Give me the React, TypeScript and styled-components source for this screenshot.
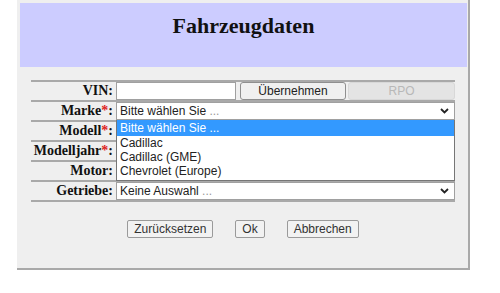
import React from 'react';
import styled, { createGlobalStyle } from 'styled-components';

const GlobalStyle = createGlobalStyle`
    html, body {
        margin: 0;
        background: #ffffff;
    }
`;

const Panel = styled.div`
    background: #efefef;
    border-bottom: 2px solid #a9a9a9;
    border-right: 2px solid #a9a9a9;
    box-sizing: border-box;
    height: 270px;
    margin-left: 17px;
    padding: 3px 1px 0 3px;
    width: 453px;
`;

const Header = styled.div`
    background: #ccccff;
    box-sizing: border-box;
    height: 64px;
    padding-top: 10px;
`;

const Title = styled.h1`
    color: #111;
    font-family: "Liberation Serif", serif;
    font-size: 22px;
    font-weight: bold;
    line-height: 25px;
    margin: 0;
    text-align: center;
`;

const FormTable = styled.div`
    border-top: 2px solid #a9a9a9;
    margin: 13px 0 0 11px;
    width: 424px;
`;

const Row = styled.div`
    align-items: center;
    border-bottom: 2px solid #a9a9a9;
    display: grid;
    grid-template-columns: 85px 1fr;
    height: 18px;
`;

const Label = styled.label`
    color: #111;
    font-family: "Liberation Serif", serif;
    font-size: 14px;
    font-weight: bold;
    line-height: 18px;
    padding-right: 3px;
    text-align: right;
    white-space: nowrap;
`;

const Required = styled.span`
    color: #d22;
`;

const Field = styled.div`
    display: flex;
    height: 18px;
    position: relative;
`;

const TextInput = styled.input`
    background: #fff;
    border: 1px solid #a0a0a0;
    box-sizing: border-box;
    height: 18px;
    margin: 0 4px 0 0;
    padding: 0 2px;
    width: 120px;
`;

const SmallButton = styled.button<{ $width?: number }>`
    background: ${({ disabled }) => (disabled ? '#e4e4e4' : '#f0f0f0')};
    border: 1px solid ${({ disabled }) => (disabled ? '#d8d8d8' : '#8f8f8f')};
    border-radius: 3px;
    box-sizing: border-box;
    color: ${({ disabled }) => (disabled ? '#b8b8b8' : '#222')};
    font-family: "Liberation Sans", Arial, sans-serif;
    font-size: 12px;
    height: 18px;
    line-height: 14px;
    margin-right: 2px;
    padding: 0;
    width: ${({ $width }) => $width || 106}px;
`;

const SelectBox = styled.div`
    align-items: center;
    background: #fff;
    border: 1px solid #a0a0a0;
    box-sizing: border-box;
    color: #222;
    display: flex;
    font-family: "Liberation Sans", Arial, sans-serif;
    font-size: 12px;
    height: 18px;
    justify-content: space-between;
    padding: 0 5px 0 3px;
    width: 339px;
`;

const Dots = styled.span`
    color: #999;
`;

const DropList = styled.ul`
    background: #fff;
    border: 1px solid #767676;
    border-top: none;
    box-sizing: border-box;
    font-family: "Liberation Sans", Arial, sans-serif;
    font-size: 12px;
    left: 0;
    list-style: none;
    margin: 0;
    padding: 0 0 2px;
    position: absolute;
    top: 18px;
    width: 339px;
    z-index: 2;
`;

const Option = styled.li<{ $active?: boolean }>`
    background: ${({ $active }) => ($active ? '#3399ff' : 'transparent')};
    color: ${({ $active }) => ($active ? '#fff' : '#222')};
    height: ${({ $active }) => ($active ? 16 : 14)}px;
    line-height: ${({ $active }) => ($active ? 16 : 14)}px;
    padding-left: 3px;
`;

const Actions = styled.div`
    display: flex;
    gap: 22px;
    justify-content: center;
    margin: 18px 0 0 11px;
    width: 424px;
`;

const ActionButton = styled.button`
    background: #f2f2f2;
    border: 1px solid #9a9a9a;
    border-radius: 2px;
    box-sizing: border-box;
    color: #333;
    font-family: "Liberation Sans", Arial, sans-serif;
    font-size: 12px;
    height: 18px;
    line-height: 14px;
    padding: 0 6px;
`;

const Chevron = () => (
    <svg width="9" height="6" viewBox="0 0 9 6">
        <path d="M1 1 L4.5 4.5 L8 1" fill="none" stroke="#222" strokeWidth="1.8" />
    </svg>
);

const Select = ({ value }: { value: string }) => (
    <SelectBox>
        <span>
            {value} <Dots>...</Dots>
        </span>
        <Chevron />
    </SelectBox>
);

const models = ['Cadillac', 'Cadillac (GME)', 'Chevrolet (Europe)'];

export default function App() {
    return (
        <>
            <GlobalStyle />
            <Panel>
                <Header>
                    <Title>Fahrzeugdaten</Title>
                </Header>
                <FormTable>
                    <Row>
                        <Label>VIN:</Label>
                        <Field>
                            <TextInput type="text" />
                            <SmallButton>Übernehmen</SmallButton>
                            <SmallButton disabled $width={107}>RPO</SmallButton>
                        </Field>
                    </Row>
                    <Row>
                        <Label>Marke<Required>*</Required>:</Label>
                        <Field>
                            <Select value="Bitte wählen Sie" />
                            <DropList>
                                <Option $active>Bitte wählen Sie ...</Option>
                                {models.map((m) => (
                                    <Option key={m}>{m}</Option>
                                ))}
                            </DropList>
                        </Field>
                    </Row>
                    <Row>
                        <Label>Modell<Required>*</Required>:</Label>
                        <Field />
                    </Row>
                    <Row>
                        <Label>Modelljahr<Required>*</Required>:</Label>
                        <Field />
                    </Row>
                    <Row>
                        <Label>Motor:</Label>
                        <Field />
                    </Row>
                    <Row>
                        <Label>Getriebe:</Label>
                        <Field>
                            <Select value="Keine Auswahl" />
                        </Field>
                    </Row>
                </FormTable>
                <Actions>
                    <ActionButton>Zurücksetzen</ActionButton>
                    <ActionButton>Ok</ActionButton>
                    <ActionButton>Abbrechen</ActionButton>
                </Actions>
            </Panel>
        </>
    );
}
